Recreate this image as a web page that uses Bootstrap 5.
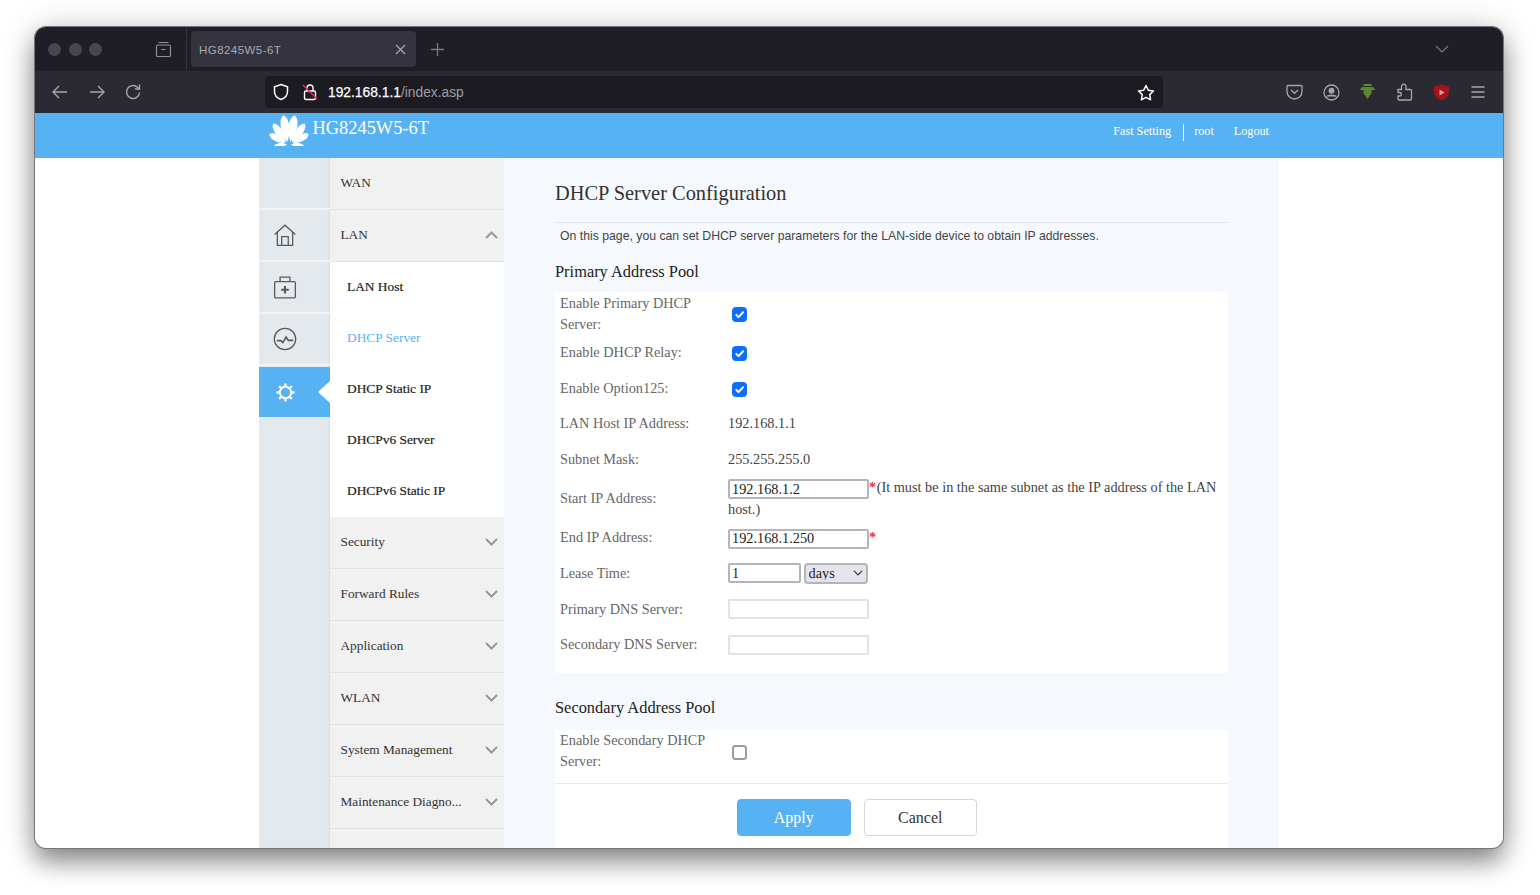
<!DOCTYPE html>
<html lang="en">
<head>
<meta charset="UTF-8">
<title>HG8245W5-6T</title>
<link rel="stylesheet" href="https://cdn.jsdelivr.net/npm/bootstrap@5.3.0/dist/css/bootstrap.min.css">
<style>
    html, body { height: 895px; overflow: hidden; background: #fff; }
    body { font-family: "Liberation Serif", serif; padding: 27px 37px 0 35px; }
    .app-window { height: 821px; border-radius: 11px; overflow: hidden; background: #fff; box-shadow: 0 0 0 1px #77777a, 0 14px 24px rgba(0,0,0,.4), 0 2px 34px rgba(0,0,0,.2); }
    .tab-strip { height: 44px; background: #1f1e27; color: #8f8f96; }
    .dots { width: 152px; border-right: 1px solid #35343c; padding-left: 13px; align-self: stretch; }
    .dot { width: 13px; height: 13px; border-radius: 50%; background: #47474c; margin-right: 7.5px; }
    .archive { margin-left: 45px; }
    .tab-pill { width: 225px; height: 36px; margin-left: 4px; padding: 1px 10px 0 8px; background: #35343e; border-radius: 4px; font: 11.5px "Liberation Sans", sans-serif; letter-spacing: .45px; color: #a9a9af; }
    .tab-plus { margin-left: 15px; }
    .tab-more { margin-left: auto; margin-right: 54px; }
    .tool-bar { height: 42px; background: #2b2a33; color: #a5a5ab; }
    .tool-bar svg { flex: none; }
    .nav-icons { width: 230px; padding-left: 16px; gap: 18.5px; }
    .url-box { width: 898px; height: 32px; background: #1c1b22; border-radius: 4px; padding: 0 8px; font: 13.8px "Liberation Sans", sans-serif; color: #9c9ca2; }
    .lock-icon { margin-left: 13px; }
    .url-host { color: #fbfbfe; margin-left: 10px; -webkit-text-stroke: .25px #fbfbfe; }
    .ext-icons { margin-left: 113.5px; }
    .ext-cell { width: 36.6px; }
    .top-head { height: 45px; background: #57b2f3; color: #fff; }
    .shell { width: 1020px; margin-left: 224px; }
    .brand-name { font-size: 18.4px; line-height: 30px; margin-left: 3.5px; }
    .head-inner { padding-left: 10px; padding-right: 10px; height: 45px; }
    .head-links { font-size: 12.2px; height: 37px; }
    .head-sep { width: 1px; height: 17px; background: #fff; margin: 2px 10.5px 0 11.5px; }
    .logout-link { margin-left: 20px; }
    .main-wrap { height: 690px; overflow: hidden; }
    .rail { width: 71px; flex: none; background: #e4e9ee; box-shadow: inset -2px 0 2px -1px #d6dbe0; }
    .rail-cell { height: 52px; border-bottom: 2px solid #f0f2f4; padding-right: 19px; }
    .rail-on { background: #57b2f3; height: 50px; margin-top: 1px; border-bottom: 0; position: relative; }
    .rail-on::after { content: ""; position: absolute; right: 0; top: 14px; border: 11px solid transparent; border-left: 0; border-right: 12px solid #fff; }
    .side-menu { width: 174px; flex: none; background: #f1f1f1; }
    .menu-head { height: 52px; padding: 0 6px 2px 10.5px; color: #333; border-bottom: 1px solid #e3e3e3; font-size: 13.3px; }
    .sub-menu { background: #fff; padding: 0; }
    .sub-item { height: 51px; padding: 0 0 1px 17px; font-size: 13.4px; color: #222; -webkit-text-stroke: .2px #222; }
    .sub-on { color: #57b2f3; -webkit-text-stroke: 0; }
    .content-pane { width: 775px; flex: none; background: #f5f9fe; padding: 0 51px; }
    .page-title { font-size: 20.4px; font-weight: 400; color: #333; line-height: 24px; margin: 23px 0 0; padding-bottom: 17px; border-bottom: 1px solid #e4e6e9; }
    .page-note { font: 12.25px/16px "Liberation Sans", sans-serif; color: #444; margin: 5px 0 0 5px; }
    .pool-title { font-size: 16.4px; font-weight: 400; color: #222; line-height: 20px; margin: 18px 0 10px; }
    .pool-box { background: #fff; padding: 0 10px 0 5px; font-size: 14.3px; line-height: 21px; color: #444; }
    .pool-one { padding-bottom: 11px; }
    .field-row { min-height: 35.6px; }
    .pool-one .field-row:first-child { min-height: 43px; }
    .field-name { width: 168px; flex: none; color: #666; padding-right: 20px; }
    .field-check { width: 15px; height: 15px; margin: 2px 0 0 4px; border: 2px solid #9a9aa8; border-radius: 3px; }
    .form-check-input.field-check:checked[type=checkbox] { border: 1px solid #0d6efd; background-size: 100% 100%; --bs-form-check-bg-image: url("data:image/svg+xml,%3csvg xmlns='http://www.w3.org/2000/svg' viewBox='0 0 20 20'%3e%3cpath fill='none' stroke='%23fff' stroke-linecap='round' stroke-linejoin='round' stroke-width='3' d='m5 10.5 3.5 3.5 7-7.5'/%3e%3c/svg%3e"); }
    .ip-input { width: 141px; height: 20px; padding: 0 2px; font: 14.3px/16px "Liberation Serif", serif; color: #222; border: 2px solid #b4b4bc; border-radius: 2px; }
    .ip-empty { border-color: #e2e2e6; }
    .lease-input { width: 73px; }
    .lease-select { width: 64px; height: 21px; margin-left: 2.5px; padding: 0 3px 2px; font: 14.3px/16px "Liberation Serif", serif; color: #222; border: 2px solid #b4b4bc; border-radius: 4px; background-color: #e4e4ea; background-size: 10px 10px; background-position: right 3px center; }
    .req { color: #f0323c; font-weight: 700; margin-right: .5px; }
    .pool-two-title { margin: 25px 0 12px; }
    .pool-two { height: 118px; }
    .btn-bar { border-top: 1px solid #e8e8e8; margin: 11px -10px 0 -5px; padding-top: 15px; padding-left: 182px; gap: 13px; }
    .act-btn { height: 37px; font: 16px "Liberation Serif", serif; border-radius: 4px; padding: 0; width: 113.5px; }
    .act-apply { background: #57b2f3; border: 1px solid #57b2f3; color: #fff; }
    .act-cancel { background: #fff; border: 1.5px solid #d6d6d6; color: #333; }
</style>
</head>
<body>
<div class="app-window d-flex flex-column">
    <div class="tab-strip d-flex align-items-center">
        <div class="dots d-flex align-items-center">
            <span class="dot"></span><span class="dot"></span><span class="dot"></span>
            <svg class="archive" width="17" height="17" viewBox="0 0 17 17" fill="none" stroke="#8f8f96" stroke-width="1.2"><path d="M3.5 1.5h10M1.5 5.500a1.5 1.5 0 0 1 1.5-1.5h11a1.5 1.5 0 0 1 1.5 1.5v9a1 1 0 0 1-1 1h-12a1 1 0 0 1-1-1z"/><path d="M6.5 8.5h4"/></svg>
        </div>
        <div class="tab-pill d-flex align-items-center justify-content-between">
            <span>HG8245W5-6T</span>
            <svg width="11" height="11" viewBox="0 0 11 11" stroke="#a9a9af" stroke-width="1.2"><path d="M1 1l9 9M10 1l-9 9"/></svg>
        </div>
        <svg class="tab-plus" width="13" height="13" viewBox="0 0 13 13" stroke="#77777d" stroke-width="1.3"><path d="M6.5 0v13M0 6.5h13"/></svg>
        <svg class="tab-more" width="14" height="8" viewBox="0 0 14 8" fill="none" stroke="#77777d" stroke-width="1.2"><path d="M1 1l6 6 6-6"/></svg>
    </div>
    <div class="tool-bar d-flex align-items-center">
        <div class="nav-icons d-flex align-items-center">
            <svg width="18" height="16" viewBox="0 0 18 16" fill="none" stroke="#a5a5ab" stroke-width="1.4"><path d="M16 8H2M8 2L2 8l6 6"/></svg>
            <svg width="18" height="16" viewBox="0 0 18 16" fill="none" stroke="#a5a5ab" stroke-width="1.4"><path d="M2 8h14M10 2l6 6-6 6"/></svg>
            <svg width="18" height="18" viewBox="0 0 18 18" fill="none" stroke="#a5a5ab" stroke-width="1.4"><path d="M15.5 9.500a6.500 6.500 0 1 1-2-5.200L15.500 6"/><path d="M15.500 1.500V6H11"/></svg>
        </div>
        <div class="url-box d-flex align-items-center">
            <svg width="16" height="18" viewBox="0 0 16 18" fill="none" stroke="#fbfbfe" stroke-width="1.5"><path d="M8 1.500l6.500 2.200v4.800c0 4-3 6.800-6.500 8-3.500-1.200-6.500-4-6.500-8V3.700z"/></svg>
            <svg class="lock-icon" width="16" height="18" viewBox="0 0 16 18" fill="none"><path d="M5 8V5a3 3 0 0 1 6 0v3" stroke="#fbfbfe" stroke-width="1.4"/><rect x="2.500" y="8" width="11" height="8.500" rx="1.500" stroke="#fbfbfe" stroke-width="1.4"/><path d="M1 2l14 14" stroke="#e22850" stroke-width="1.6"/></svg>
            <span class="url-host">192.168.1.1</span><span>/index.asp</span>
            <svg class="ms-auto" width="18" height="17" viewBox="0 0 18 17" fill="none" stroke="#fbfbfe" stroke-width="1.5" stroke-linejoin="round"><path d="M9 1.500l2.300 4.800 5.200.7-3.800 3.600.9 5.200L9 13.300l-4.600 2.500.9-5.200L1.500 7l5.200-.7z"/></svg>
        </div>
        <div class="ext-icons d-flex align-items-center">
            <div class="ext-cell d-flex justify-content-center">
                <svg width="17" height="16" viewBox="0 0 17 16" fill="none" stroke="#a5a5ab" stroke-width="1.3"><path d="M2 1.500h13a1 1 0 0 1 1 1v5a7.500 7.500 0 0 1-15 0v-5a1 1 0 0 1 1-1z"/><path d="M5 6l3.500 3.300L12 6"/></svg>
            </div>
            <div class="ext-cell d-flex justify-content-center">
                <svg width="17" height="17" viewBox="0 0 17 17" fill="none" stroke="#a5a5ab" stroke-width="1.3"><circle cx="8.500" cy="8.500" r="7.500"/><circle cx="8.500" cy="6.800" r="2.300" fill="#a5a5ab"/><path d="M4 12.500c1-1.800 8-1.800 9 0" fill="#a5a5ab"/></svg>
            </div>
            <div class="ext-cell d-flex justify-content-center">
                <svg width="17" height="17" viewBox="0 0 17 17"><path d="M4.500 0h8v2h-8zM3 3h11l2.500 3H12.500v3L8.500 15l-4-6V6H.5z" fill="#5c8a26"/></svg>
            </div>
            <div class="ext-cell d-flex justify-content-center">
                <svg width="16" height="18" viewBox="0 0 16 18" fill="none" stroke="#a5a5ab" stroke-width="1.3"><path d="M1 6.500h3.500V4a2.300 2.300 0 1 1 4.500 0v2.500h4.500a1 1 0 0 1 1 1v8.500a1 1 0 0 1-1 1H2a1 1 0 0 1-1-1v-3h2a1.800 1.800 0 0 0 0-3.500H1z"/></svg>
            </div>
            <div class="ext-cell d-flex justify-content-center">
                <svg width="17" height="17" viewBox="0 0 17 17"><path d="M8.500 .5l7.500 2v6c0 3.500-3.500 6.500-7.500 8-4-1.500-7.500-4.500-7.500-8v-6z" fill="#a3141d"/><path d="M6.500 5.500l5 3-5 3z" fill="#d9a0a0"/></svg>
            </div>
            <div class="ext-cell d-flex justify-content-center">
                <svg width="14" height="12" viewBox="0 0 14 12" stroke="#a5a5ab" stroke-width="1.3"><path d="M.5 1h13M.5 6h13M.5 11h13"/></svg>
            </div>
        </div>
    </div>
    <div class="top-head">
        <div class="shell head-inner d-flex">
            <div class="d-flex align-items-start">
                <svg width="40" height="33" viewBox="0 0 40 33" fill="#fff">
                    <path transform="translate(18.5 29) rotate(-9)" d="M0 0C-3-6-5-14-4-20Q-3-25 0-27 3-25 4-20C5-14 3-6 0 0z"/>
                    <path transform="translate(21.5 29) rotate(9)" d="M0 0C-3-6-5-14-4-20Q-3-25 0-27 3-25 4-20C5-14 3-6 0 0z"/>
                    <path transform="translate(17 29.5) rotate(-34)" d="M0 0C-3-5-4.500-12-3.500-17Q-3-21 0-23 3-21 3.500-17C4.500-12 3-5 0 0z"/>
                    <path transform="translate(23 29.5) rotate(34)" d="M0 0C-3-5-4.500-12-3.500-17Q-3-21 0-23 3-21 3.500-17C4.500-12 3-5 0 0z"/>
                    <path transform="translate(16 30) rotate(-60)" d="M0 0C-2.500-4-4-9-3-14Q-2.500-17 0-18 2.500-17 3-14C4-9 2.500-4 0 0z"/>
                    <path transform="translate(24 30) rotate(60)" d="M0 0C-2.500-4-4-9-3-14Q-2.500-17 0-18 2.500-17 3-14C4-9 2.500-4 0 0z"/>
                    <path transform="translate(18 31.5) rotate(-96)" d="M0 0C-2-3-2.500-7-2-9Q-1.500-12 0-13 1.500-12 2-9C2.500-7 2-3 0 0z"/>
                    <path transform="translate(22 31.5) rotate(96)" d="M0 0C-2-3-2.500-7-2-9Q-1.500-12 0-13 1.500-12 2-9C2.500-7 2-3 0 0z"/>
                </svg>
                <span class="brand-name">HG8245W5-6T</span>
            </div>
            <div class="head-links ms-auto d-flex align-items-center">
                <span>Fast Setting</span><span class="head-sep"></span><span>root</span><span class="logout-link">Logout</span>
            </div>
        </div>
    </div>
    <div class="shell main-wrap d-flex">
        <div class="rail">
            <div class="rail-cell"></div>
            <div class="rail-cell d-flex align-items-center justify-content-center">
                <svg width="24" height="24" viewBox="0 0 22 22" fill="none" stroke="#5a5a5a" stroke-width="1.2"><path d="M1.500 10.500L11 2l9.500 8.500M4 8.500V20.500h14V8.500"/><path d="M8 20.500v-8h6v8"/></svg>
            </div>
            <div class="rail-cell d-flex align-items-center justify-content-center">
                <svg width="24" height="24" viewBox="0 0 22 22" fill="none" stroke="#5a5a5a" stroke-width="1.2"><rect x="1.500" y="6" width="19" height="15" rx="1"/><path d="M6.500 6V2h9v4"/><path d="M11 10v7M7.500 13.500h7" stroke-width="1.9"/></svg>
            </div>
            <div class="rail-cell d-flex align-items-center justify-content-center">
                <svg width="24" height="24" viewBox="0 0 22 22" fill="none" stroke="#5a5a5a" stroke-width="1.2"><circle cx="11" cy="11" r="9.800"/><path d="M3.500 12.500h3.500l2 1.800 3-5 2 3h4.500" stroke-width="1.5"/></svg>
            </div>
            <div class="rail-cell rail-on d-flex align-items-center justify-content-center">
                <svg width="21" height="21" viewBox="0 0 22 22" fill="none" stroke="#fff" stroke-width="2"><circle cx="11" cy="11" r="6"/><path d="M11 1.500v3M11 17.500v3M1.500 11h3M17.500 11h3M4.300 4.300l2 2M15.700 15.700l2 2M4.300 17.700l2-2M15.700 6.300l2-2" stroke-width="2.4"/></svg>
            </div>
        </div>
        <div class="side-menu">
            <div class="menu-head d-flex align-items-center">WAN</div>
            <div class="menu-head d-flex align-items-center justify-content-between">LAN
                <svg width="13" height="8" viewBox="0 0 13 8" fill="none" stroke="#999" stroke-width="2"><path d="M1 7l5.500-5.500L12 7"/></svg>
            </div>
            <div class="sub-menu">
                <div class="sub-item d-flex align-items-center">LAN Host</div>
                <div class="sub-item sub-on d-flex align-items-center">DHCP Server</div>
                <div class="sub-item d-flex align-items-center">DHCP Static IP</div>
                <div class="sub-item d-flex align-items-center">DHCPv6 Server</div>
                <div class="sub-item d-flex align-items-center">DHCPv6 Static IP</div>
            </div>
            <div class="menu-head d-flex align-items-center justify-content-between">Security
                <svg width="13" height="8" viewBox="0 0 13 8" fill="none" stroke="#999" stroke-width="2"><path d="M1 1l5.500 5.500L12 1"/></svg>
            </div>
            <div class="menu-head d-flex align-items-center justify-content-between">Forward Rules
                <svg width="13" height="8" viewBox="0 0 13 8" fill="none" stroke="#999" stroke-width="2"><path d="M1 1l5.500 5.500L12 1"/></svg>
            </div>
            <div class="menu-head d-flex align-items-center justify-content-between">Application
                <svg width="13" height="8" viewBox="0 0 13 8" fill="none" stroke="#999" stroke-width="2"><path d="M1 1l5.500 5.500L12 1"/></svg>
            </div>
            <div class="menu-head d-flex align-items-center justify-content-between">WLAN
                <svg width="13" height="8" viewBox="0 0 13 8" fill="none" stroke="#999" stroke-width="2"><path d="M1 1l5.500 5.500L12 1"/></svg>
            </div>
            <div class="menu-head d-flex align-items-center justify-content-between">System Management
                <svg width="13" height="8" viewBox="0 0 13 8" fill="none" stroke="#999" stroke-width="2"><path d="M1 1l5.500 5.500L12 1"/></svg>
            </div>
            <div class="menu-head d-flex align-items-center justify-content-between">Maintenance Diagno...
                <svg width="13" height="8" viewBox="0 0 13 8" fill="none" stroke="#999" stroke-width="2"><path d="M1 1l5.500 5.500L12 1"/></svg>
            </div>
        </div>
        <div class="content-pane">
            <h1 class="page-title">DHCP Server Configuration</h1>
            <p class="page-note">On this page, you can set DHCP server parameters for the LAN-side device to obtain IP addresses.</p>
            <h2 class="pool-title">Primary Address Pool</h2>
            <div class="pool-box pool-one">
                <div class="field-row d-flex align-items-center">
                    <div class="field-name">Enable Primary DHCP Server:</div>
                    <input class="form-check-input field-check" type="checkbox" checked>
                </div>
                <div class="field-row d-flex align-items-center">
                    <div class="field-name">Enable DHCP Relay:</div>
                    <input class="form-check-input field-check" type="checkbox" checked>
                </div>
                <div class="field-row d-flex align-items-center">
                    <div class="field-name">Enable Option125:</div>
                    <input class="form-check-input field-check" type="checkbox" checked>
                </div>
                <div class="field-row d-flex align-items-center">
                    <div class="field-name">LAN Host IP Address:</div>
                    <div>192.168.1.1</div>
                </div>
                <div class="field-row d-flex align-items-center">
                    <div class="field-name">Subnet Mask:</div>
                    <div>255.255.255.0</div>
                </div>
                <div class="field-row d-flex align-items-center">
                    <div class="field-name">Start IP Address:</div>
                    <div><input class="form-control d-inline-block ip-input align-middle" value="192.168.1.2"><span class="req">*</span><span>(It must be in the same subnet as the IP address of the LAN</span> <span>host.)</span></div>
                </div>
                <div class="field-row d-flex align-items-center">
                    <div class="field-name">End IP Address:</div>
                    <div><input class="form-control d-inline-block ip-input align-middle" value="192.168.1.250"><span class="req">*</span></div>
                </div>
                <div class="field-row d-flex align-items-center">
                    <div class="field-name">Lease Time:</div>
                    <div class="d-flex align-items-center">
                        <input class="form-control ip-input lease-input" value="1">
                        <select class="form-select lease-select"><option>days</option></select>
                    </div>
                </div>
                <div class="field-row d-flex align-items-center">
                    <div class="field-name">Primary DNS Server:</div>
                    <input class="form-control ip-input ip-empty">
                </div>
                <div class="field-row d-flex align-items-center">
                    <div class="field-name">Secondary DNS Server:</div>
                    <input class="form-control ip-input ip-empty">
                </div>
            </div>
            <h2 class="pool-title pool-two-title">Secondary Address Pool</h2>
            <div class="pool-box pool-two">
                <div class="field-row d-flex align-items-center">
                    <div class="field-name">Enable Secondary DHCP Server:</div>
                    <input class="form-check-input field-check" type="checkbox">
                </div>
                <div class="btn-bar d-flex">
                    <button class="btn act-btn act-apply" type="button">Apply</button>
                    <button class="btn act-btn act-cancel" type="button">Cancel</button>
                </div>
            </div>
        </div>
    </div>
</div>
</body>
</html>
